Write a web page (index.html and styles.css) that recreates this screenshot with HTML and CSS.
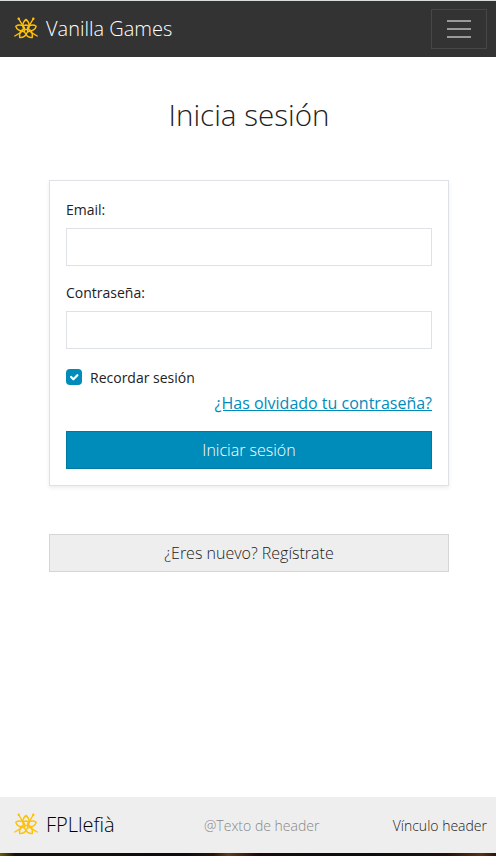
FILE: index.html
```html
<!DOCTYPE html>
<html lang="es">
<head>
<meta charset="utf-8">
<title>Vanilla Games</title>
<link rel="stylesheet" href="styles.css">
</head>
<body>
<svg width="0" height="0" class="defs" aria-hidden="true">
  <symbol id="flower" viewBox="0 0 24 22">
    <g fill="none" stroke="#ffc107" stroke-width="1.4" stroke-linecap="round" stroke-linejoin="round">
      <path d="M8.8 9C8.8 6 10 4 12 2.4C14 4 15.2 6 15.2 9"/>
      <path d="M8.8 8.6C5.8 7.6 3.4 8 1.8 9.2C2.6 11.8 4.8 13.6 7.8 14"/>
      <path d="M15.2 8.6C18.2 7.6 20.6 8 22.2 9.2C21.4 11.8 19.2 13.6 16.2 14"/>
      <path d="M7.6 13.2C5.8 15.6 5.2 18 5.8 20.6C8.6 20.8 10.6 19.6 12 17.6"/>
      <path d="M16.4 13.2C18.2 15.6 18.8 18 18.2 20.6C15.4 20.8 13.4 19.6 12 17.6"/>
      <path d="M12 8L8.8 9L9.4 12L7.8 14L10.6 15L12 17.6L13.4 15L16.2 14L14.6 12L15.2 9ZM10.4 10.5V14.5M13.6 10.5V14.5M10 12.5H14"/>
      <path d="M4.5 1.5L9.4 9.6M19.5 1.5L14.6 9.6M.8 19L7 15.4M23.2 19L17 15.4"/>
    </g>
    <g fill="#ffc107"><circle cx="4.7" cy="1.8" r="1.2"/><circle cx="19.3" cy="1.8" r="1.2"/></g>
  </symbol>
</svg>
<header class="navbar">
  <a class="brand"><svg class="logo"><use href="#flower"/></svg>Vanilla Games</a>
  <button class="toggler" aria-label="Menú"><svg width="30" height="30" viewBox="0 0 30 30"><path d="M4 7h22M4 15h22M4 23h22" stroke="#999" stroke-width="2" stroke-linecap="square"/></svg></button>
</header>
<main class="content">
  <h1>Inicia sesión</h1>
  <form class="card">
    <label for="email">Email:</label>
    <input class="field" id="email" type="email">
    <label for="pass">Contraseña:</label>
    <input class="field" id="pass" type="password">
    <div class="check">
      <span class="box"><svg width="16" height="16" viewBox="0 0 20 20"><path fill="none" stroke="#fff" stroke-linecap="round" stroke-linejoin="round" stroke-width="2.8" d="m6.4 10 2.8 2.8 5-5"/></svg></span>
      <span>Recordar sesión</span>
    </div>
    <a class="forgot" href="#">¿Has olvidado tu contraseña?</a>
    <button class="btn primary" type="button">Iniciar sesión</button>
  </form>
  <button class="btn register" type="button">¿Eres nuevo? Regístrate</button>
</main>
<footer class="footer">
  <a class="brand"><svg class="logo"><use href="#flower"/></svg>FPLlefià</a>
  <span class="note">@Texto de header</span>
  <a class="link">Vínculo header</a>
</footer>
<div class="strip"></div>
</body>
</html>
```
FILE: styles.css
```css
* { box-sizing: border-box; }
body {
  margin: 0;
  height: 856px;
  display: flex;
  flex-direction: column;
  overflow: hidden;
  background: #fff;
  color: #222;
  font: 300 16px/24px "Open Sans", sans-serif;
}
.defs { position: absolute; }
.navbar {
  height: 57px;
  padding: 0 9px 0 14px;
  border-top: 1px solid #d9dedc;
  background: #333;
  display: flex;
  justify-content: space-between;
  align-items: center;
}
.brand {
  display: flex;
  align-items: center;
  gap: 8px;
  font-size: 20px;
  line-height: 30px;
}
.navbar .brand { color: #fff; }
.logo { width: 24px; height: 22px; margin-top: -3px; }
.toggler {
  width: 56px;
  height: 40px;
  padding: 0;
  border: 1px solid #474747;
  background: none;
  display: flex;
  align-items: center;
  justify-content: center;
}
.content { flex: 1; padding: 38px 47px 0 49px; }
h1 {
  margin: 0 0 46px;
  font-size: 29.6px;
  line-height: 39px;
  font-weight: 300;
  text-align: center;
}
.card {
  height: 306px;
  padding: 17px 16px 16px;
  border: 1px solid #dee2e6;
  box-shadow: 0 2px 4px rgba(0,0,0,.075);
  display: flex;
  flex-direction: column;
}
label {
  margin-bottom: 7px;
  font-size: 14px;
  line-height: 23px;
  font-weight: 400;
}
.field {
  width: 100%;
  height: 38px;
  margin: 0 0 15px;
  border: 1px solid #dee2e6;
  background: #fff;
}
.check {
  margin-top: 3px;
  height: 21px;
  display: flex;
  gap: 8px;
  font-size: 14px;
  line-height: 21px;
  font-weight: 400;
}
.box { width: 16px; height: 16px; margin-top: 2px; border-radius: 4px; background: #008cba; }
.box svg { display: block; }
.forgot { align-self: flex-end; margin: 3px 0 16px; color: #008cba; font-weight: 400; }
.btn {
  display: block;
  width: 100%;
  height: 38px;
  padding: 0;
  font: inherit;
  text-align: center;
}
.primary { color: #fff; background: #008cba; border: 1px solid #0079a1; }
.register { margin-top: 48px; color: #222; background: #eee; border: 1px solid #d5d5d5; }
.footer {
  height: 56px;
  padding: 0 9px 0 14px;
  background: #eee;
  display: flex;
  justify-content: space-between;
  align-items: center;
  font-size: 14px;
}
.footer .brand { color: #000; }
.note { color: #888; margin-left: 16px; padding-top: 2px; }
.link { color: #222; padding-top: 2px; }
.strip {
  height: 3px;
  background: linear-gradient(90deg, #6b5a10, #171008 3%, #120a0b 37%, #241508 43%, #5a3c22 46%, #190b0a 52%, #0d0e0c 75%, #20110b 90%, #55301f 97%, #29150d);
}
```
